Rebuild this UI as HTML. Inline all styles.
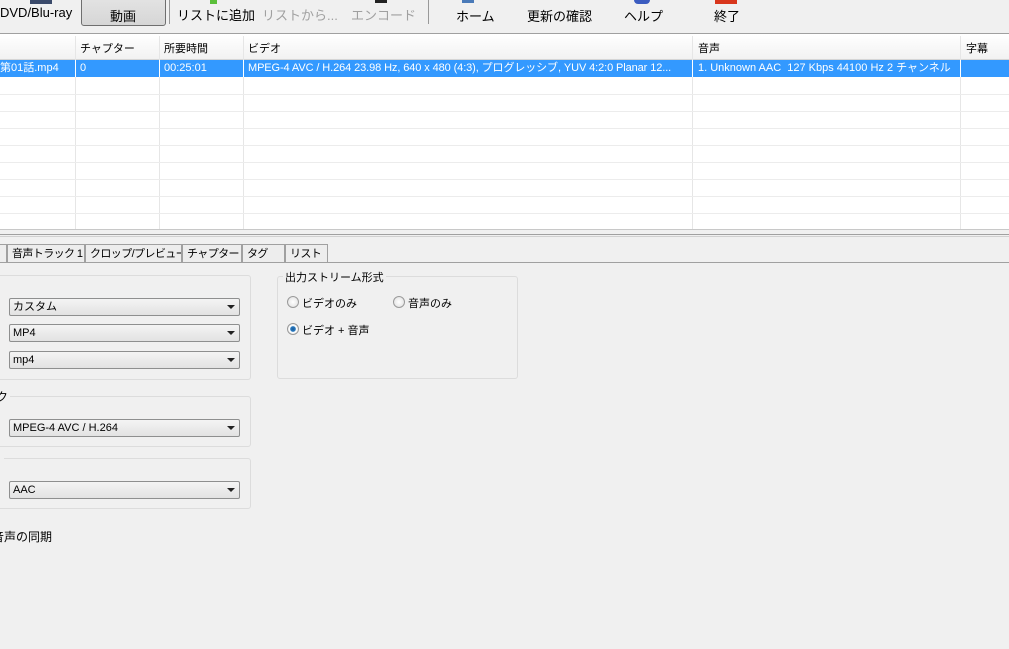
<!DOCTYPE html>
<html><head><meta charset="utf-8"><style>
body{margin:0;width:1009px;height:649px;overflow:hidden;background:#f0f0f0;font-family:"Liberation Sans","Noto Sans CJK JP",sans-serif;font-size:12px;color:#000;position:relative}
.a{position:absolute;white-space:nowrap}
.tb{font-size:13px}
.combo{position:absolute;left:9px;width:226px;height:16px;border:1px solid #8e8f8f;border-radius:2px;background:linear-gradient(#f4f4f4,#e2e2e2);font-size:11px;line-height:16px;padding-left:3px;box-sizing:content-box}
.combo:after{content:"";position:absolute;right:4px;top:6px;border-left:4px solid transparent;border-right:4px solid transparent;border-top:4px solid #222}
.grp{position:absolute;border:1px solid #dcdcdc;border-radius:3px}
.row{position:absolute;left:0;width:1009px;height:1px;background:#ececec}
.col{position:absolute;top:36px;width:1px;height:193px;background:#e6e6e6}
.tab{position:absolute;top:244px;height:18px;border:1px solid #a0a0a0;border-bottom:none;background:#ededed;font-size:11px;line-height:18px;padding-left:4px;box-sizing:border-box;white-space:nowrap;overflow:hidden;letter-spacing:-0.6px}
.radio{position:absolute;width:10px;height:10px;border:1px solid #9a9a9a;border-radius:50%;background:radial-gradient(#fff,#ddd)}
.cell{position:absolute;top:60px;height:17px;line-height:17px;color:#fff;font-size:11px;white-space:nowrap}
</style></head><body>
<div class="a" style="left:30px;top:0;width:22px;height:4px;background:#3a4a6a"></div>
<div class="a" style="left:210px;top:0;width:7px;height:4px;background:#5bbf3a"></div>
<div class="a" style="left:375px;top:0;width:12px;height:3px;background:#222"></div>
<div class="a" style="left:462px;top:0;width:12px;height:3px;background:#4a7ab8"></div>
<div class="a" style="left:634px;top:0;width:16px;height:4px;background:#3b5cc0;border-radius:0 0 8px 8px"></div>
<div class="a" style="left:715px;top:0;width:22px;height:4px;background:#d8361c"></div>
<div class="a tb" style="left:0;top:5px">DVD/Blu-ray</div>
<div class="a" style="left:81px;top:-4px;width:83px;height:28px;border:1px solid #6f6f6f;border-radius:3px;background:linear-gradient(#e4e4e4,#d6d6d6)"></div>
<div class="a tb" style="left:110px;top:6px">動画</div>
<div class="a" style="left:169px;top:0;width:1px;height:24px;background:#999"></div>
<div class="a tb" style="left:177px;top:5px">リストに追加</div>
<div class="a tb" style="left:262px;top:5px;color:#a0a0a0">リストから...</div>
<div class="a tb" style="left:351px;top:5px;color:#a0a0a0">エンコード</div>
<div class="a" style="left:428px;top:0;width:1px;height:24px;background:#999"></div>
<div class="a tb" style="left:456px;top:6px">ホーム</div>
<div class="a tb" style="left:527px;top:6px">更新の確認</div>
<div class="a tb" style="left:624px;top:6px">ヘルプ</div>
<div class="a tb" style="left:714px;top:6px">終了</div>
<div class="a" style="left:0;top:33px;width:1009px;height:1px;background:#a0a0a0"></div>
<div class="a" style="left:0;top:34px;width:1009px;height:195px;background:#fff"></div>
<div class="a" style="left:0;top:35px;width:1009px;height:24px;background:linear-gradient(#fff,#f2f2f2)"></div>
<div class="a" style="left:0;top:59px;width:1009px;height:1px;background:#d5d5d5"></div>
<div class="col" style="left:75px"></div><div class="col" style="left:159px"></div><div class="col" style="left:243px"></div><div class="col" style="left:692px"></div><div class="col" style="left:960px"></div>
<div class="a" style="left:80px;top:40px;font-size:11px">チャプター</div>
<div class="a" style="left:164px;top:40px;font-size:11px">所要時間</div>
<div class="a" style="left:248px;top:40px;font-size:11px">ビデオ</div>
<div class="a" style="left:698px;top:40px;font-size:11px">音声</div>
<div class="a" style="left:966px;top:40px;font-size:11px">字幕</div>
<div class="a" style="left:0;top:60px;width:1009px;height:17px;background:#3399ff"></div>
<div class="a" style="left:75px;top:60px;width:1px;height:17px;background:#fff"></div>
<div class="a" style="left:159px;top:60px;width:1px;height:17px;background:#fff"></div>
<div class="a" style="left:243px;top:60px;width:1px;height:17px;background:#fff"></div>
<div class="a" style="left:692px;top:60px;width:1px;height:17px;background:#fff"></div>
<div class="a" style="left:960px;top:60px;width:1px;height:17px;background:#fff"></div>
<div class="cell" style="left:0">第01話.mp4</div>
<div class="cell" style="left:80px">0</div>
<div class="cell" style="left:164px">00:25:01</div>
<div class="cell" style="left:248px;letter-spacing:-0.1px">MPEG-4 AVC / H.264 23.98 Hz, 640 x 480 (4:3), プログレッシブ, YUV 4:2:0 Planar 12...</div>
<div class="cell" style="left:698px">1. Unknown AAC&nbsp; 127 Kbps 44100 Hz 2 チャンネル</div>
<div class="row" style="top:94px"></div><div class="row" style="top:111px"></div><div class="row" style="top:128px"></div><div class="row" style="top:145px"></div><div class="row" style="top:162px"></div><div class="row" style="top:179px"></div><div class="row" style="top:196px"></div><div class="row" style="top:213px"></div>
<div class="a" style="left:0;top:229px;width:1009px;height:1px;background:#c8c8c8"></div>
<div class="a" style="left:0;top:234px;width:1009px;height:1px;background:#a0a0a0"></div>
<div class="a" style="left:0;top:236px;width:1009px;height:1px;background:#d0d0d0"></div>
<div class="tab" style="left:-5px;width:12px"></div>
<div class="tab" style="left:7px;width:78px">音声トラック 1</div>
<div class="tab" style="left:85px;width:97px">クロップ/プレビュー</div>
<div class="tab" style="left:182px;width:60px">チャプター</div>
<div class="tab" style="left:242px;width:43px">タグ</div>
<div class="tab" style="left:285px;width:43px">リスト</div>
<div class="a" style="left:0;top:262px;width:1009px;height:1px;background:#a0a0a0"></div>
<div class="grp" style="left:-5px;top:275px;width:254px;height:103px"></div>
<div class="combo" style="top:298px">カスタム</div>
<div class="combo" style="top:324px">MP4</div>
<div class="combo" style="top:351px">mp4</div>
<div class="grp" style="left:-5px;top:396px;width:254px;height:49px"></div>
<div class="a" style="left:-4px;top:388px;background:#f0f0f0;font-size:12px;padding-right:2px">ク</div>
<div class="combo" style="top:419px">MPEG-4 AVC / H.264</div>
<div class="grp" style="left:-5px;top:458px;width:254px;height:49px"></div>
<div class="a" style="left:0;top:452px;width:4px;height:10px;background:#f0f0f0"></div>
<div class="combo" style="top:481px">AAC</div>
<div class="a" style="left:-8px;top:528px;font-size:12px">音声の同期</div>
<div class="grp" style="left:277px;top:276px;width:239px;height:101px"></div>
<div class="a" style="left:283px;top:269px;background:#f0f0f0;padding:0 2px;font-size:11px">出力ストリーム形式</div>
<div class="radio" style="left:287px;top:296px"></div>
<div class="a" style="left:302px;top:295px;font-size:11px">ビデオのみ</div>
<div class="radio" style="left:393px;top:296px"></div>
<div class="a" style="left:408px;top:295px;font-size:11px">音声のみ</div>
<div class="radio" style="left:287px;top:323px;background:radial-gradient(#1a5a9a 0,#2b7bc0 35%,#fff 45%,#ddd)"></div>
<div class="a" style="left:302px;top:322px;font-size:11px">ビデオ + 音声</div>
</body></html>
